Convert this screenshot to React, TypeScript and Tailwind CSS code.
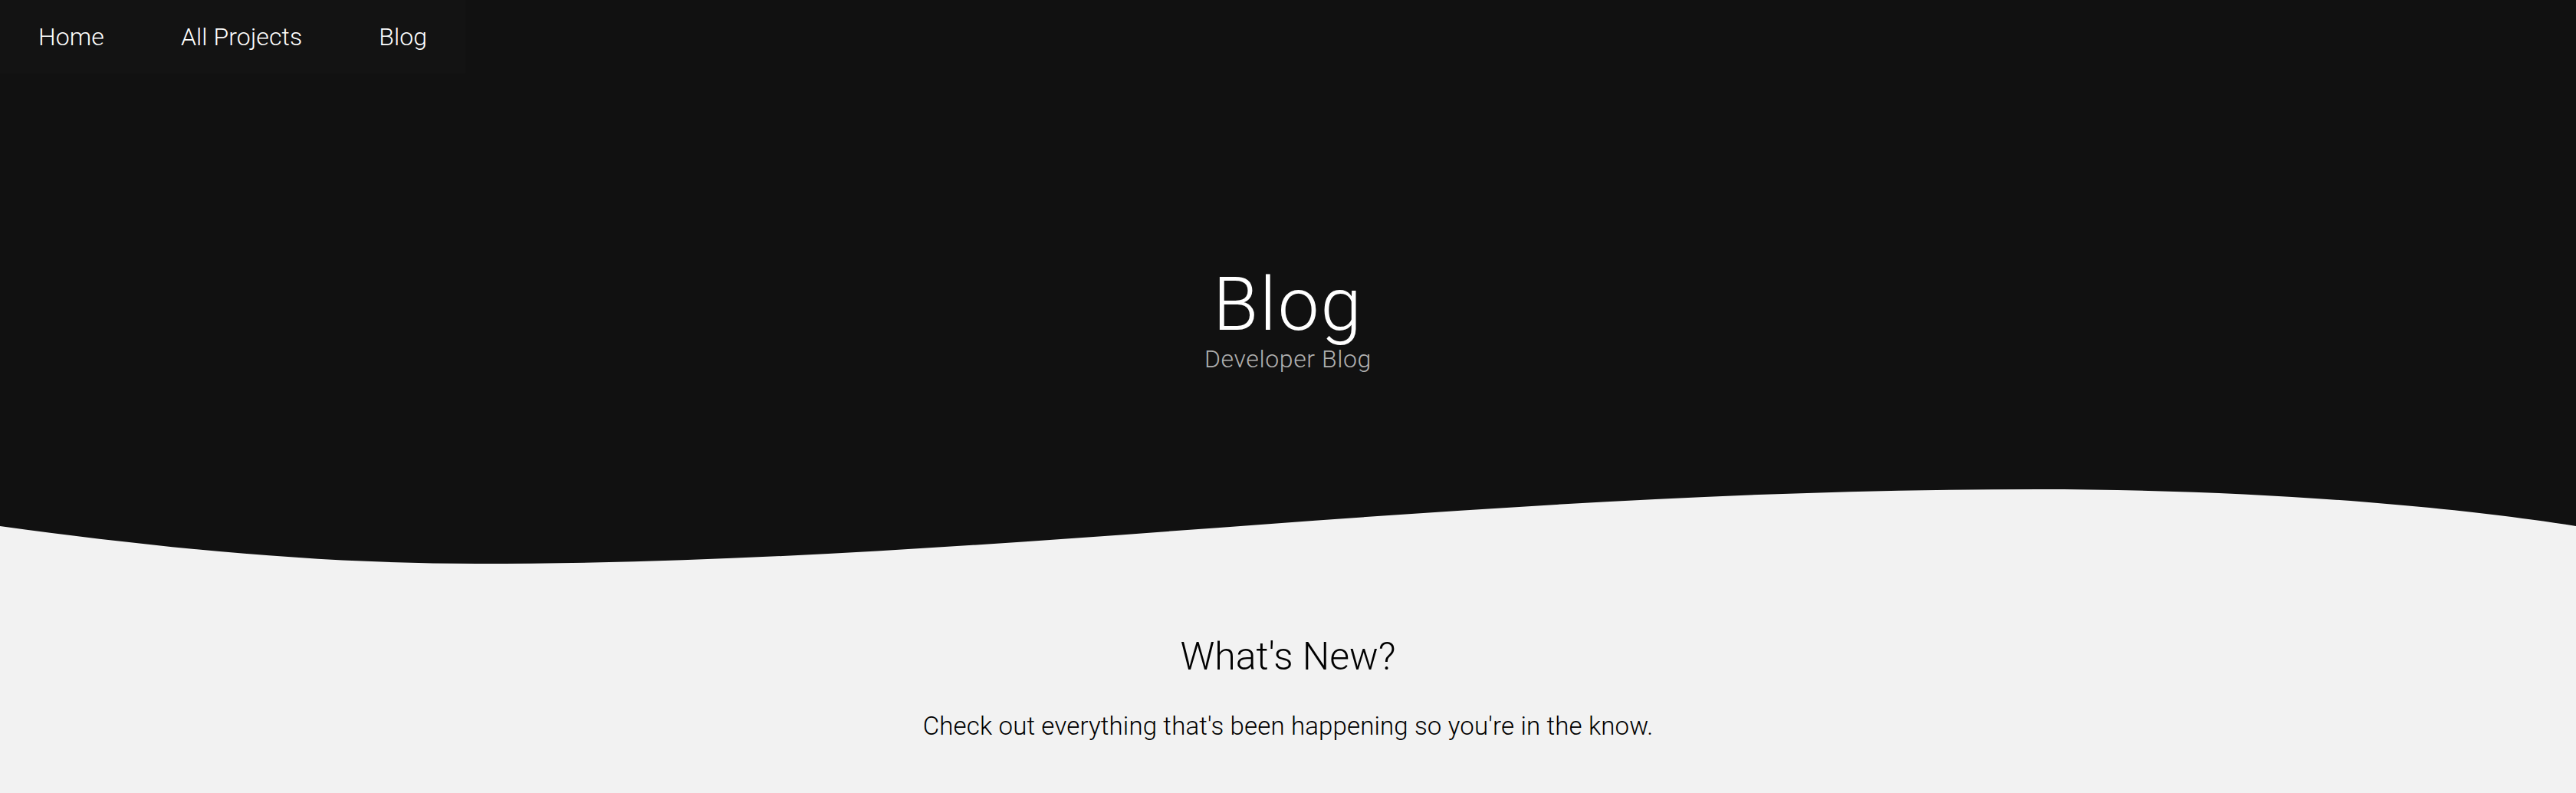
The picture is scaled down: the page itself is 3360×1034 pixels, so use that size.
import React from "react";

const links = ["Home", "All Projects", "Blog"];

function Nav() {
  return (
    <nav className="flex h-[96px]">
      {links.map((l) => (
        <a
          key={l}
          href="#"
          className="flex items-center bg-[#131313] px-[50px] text-[32px] leading-none font-light tracking-[0.1px] text-white"
        >
          {l}
        </a>
      ))}
    </nav>
  );
}

function Wave() {
  return (
    <svg
      className="block h-[120px] w-full"
      viewBox="0 0 3360 120"
      preserveAspectRatio="none"
    >
      <path
        d="M0,0 L0,65 C220,95 420,114 622,114 C1300,114 1900,17 2657,17 C2950,17 3200,40 3360,65 L3360,0 Z"
        fill="#111111"
      />
    </svg>
  );
}

export default function App() {
  return (
    <div
      className="min-h-screen bg-[#f2f2f2]"
      style={{ fontFamily: "Roboto, 'Liberation Sans', sans-serif" }}
    >
      {/* Hero */}
      <header className="bg-[#111111]">
        <Nav />
        <div className="flex flex-col items-center pt-[253px] pb-[137px]">
          <h1 className="text-[96px] leading-none font-light tracking-[2px] text-white">Blog</h1>
          <p className="mt-[7px] text-[32px] leading-none font-light tracking-[0.6px] text-[#b0b0b0]">
            Developer Blog
          </p>
        </div>
      </header>
      <Wave />

      {/* Intro */}
      <section className="flex flex-col items-center pt-[90px] pb-[73px] text-black">
        <h2 className="text-[50px] leading-none font-light">What's New?</h2>
        <p className="mt-[49px] text-[33px] leading-none font-light tracking-[0.15px]">
          Check out everything that's been happening so you're in the know.
        </p>
      </section>
    </div>
  );
}
